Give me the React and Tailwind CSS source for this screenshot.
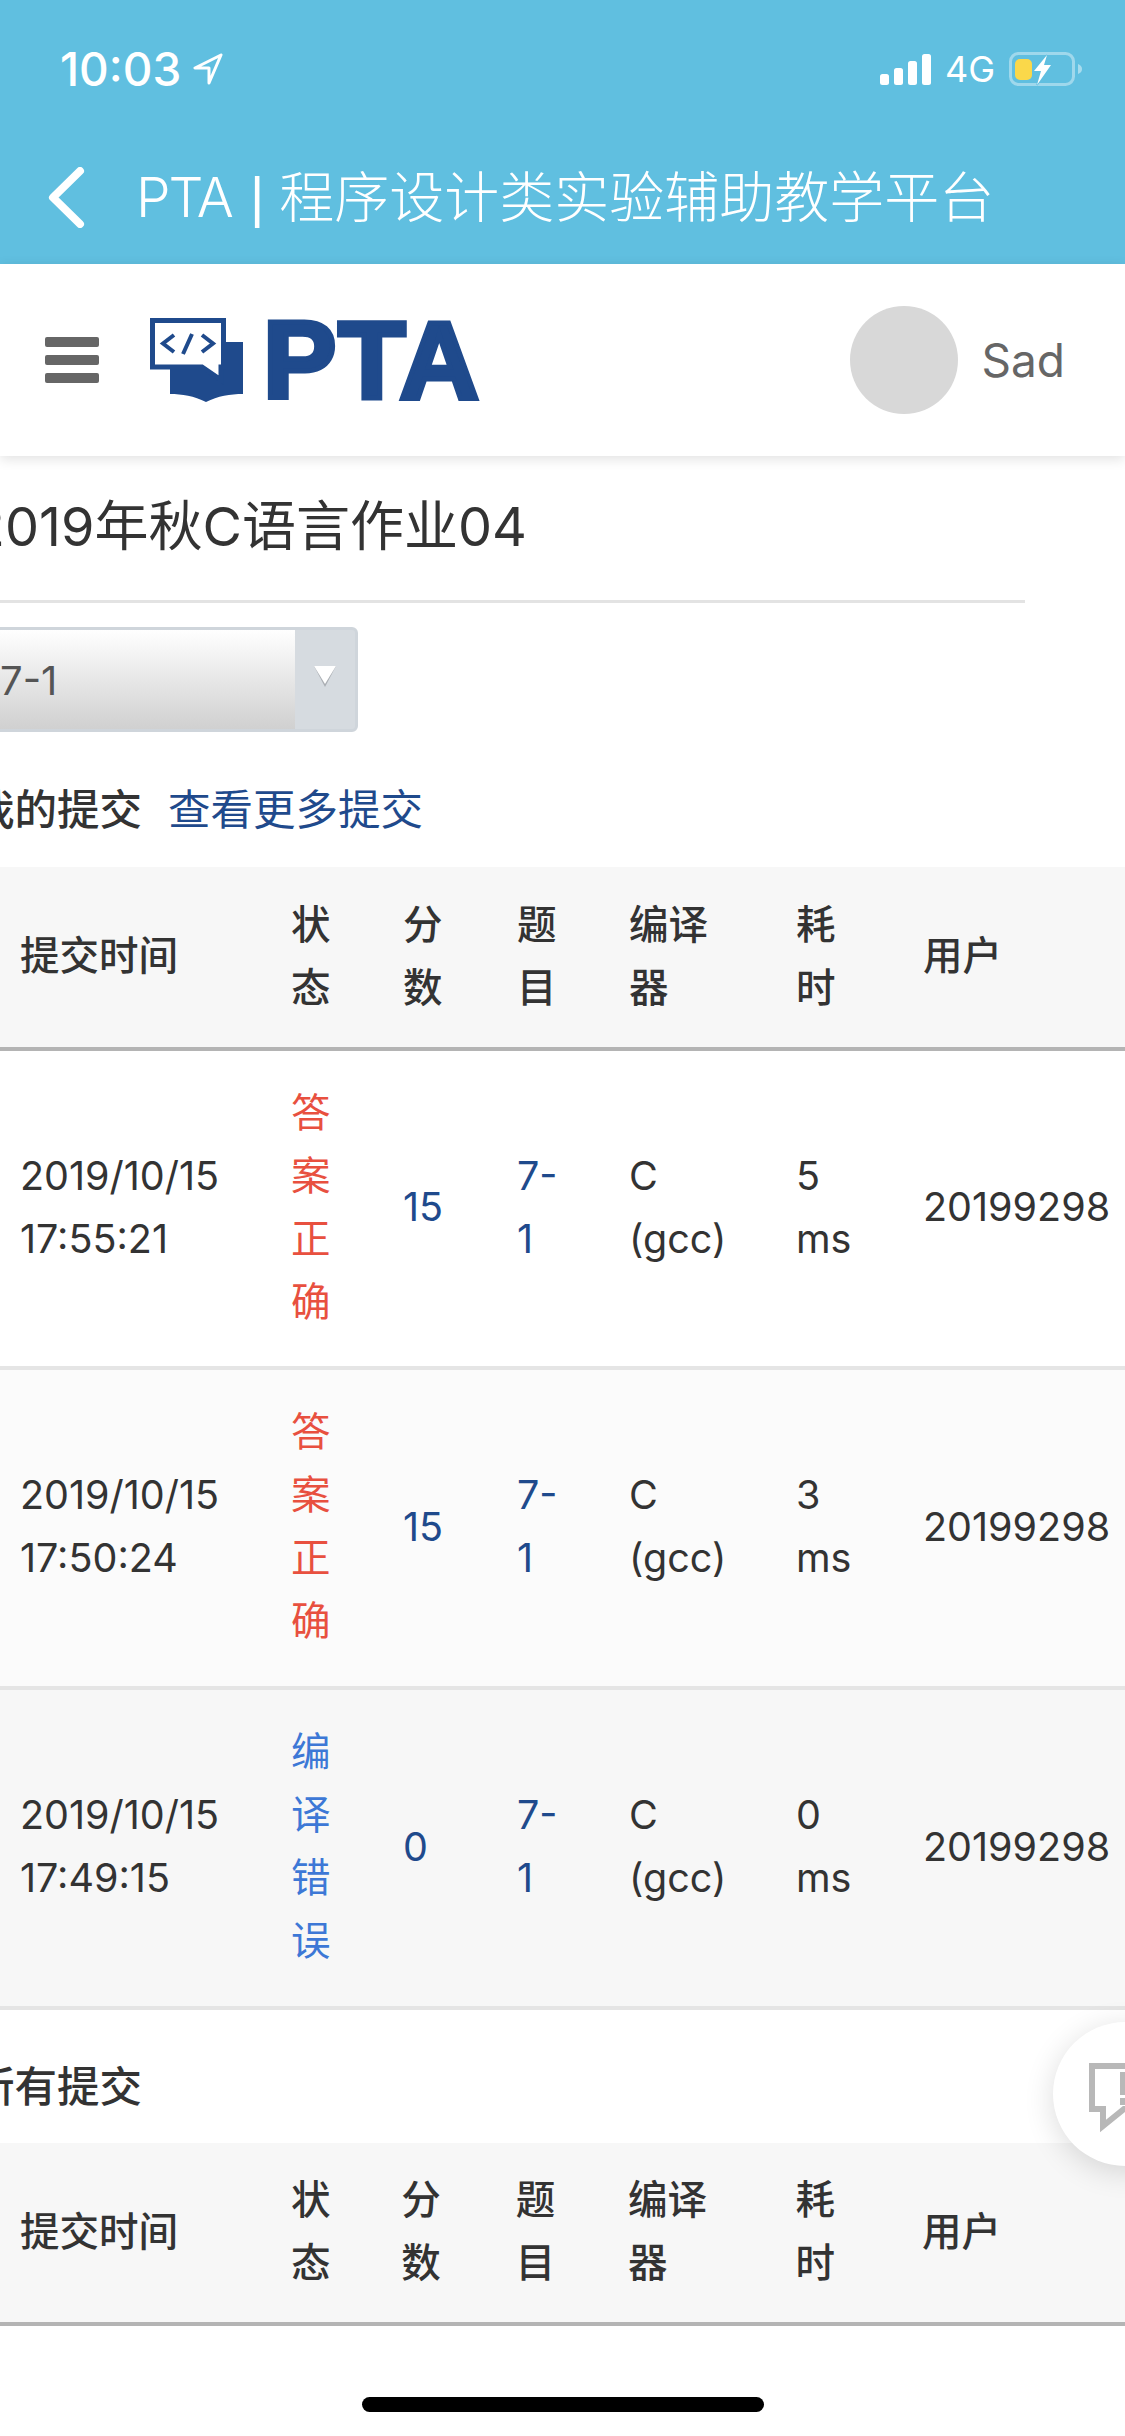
const LATIN = "font-['Inter','Noto_Sans_CJK_SC',sans-serif]";

const firstCols = ["w-[271px]", "w-[112px]", "w-[114px]", "w-[112px]", "w-[167px]", "w-[127px]", "w-[300px]"];
const secondCols = ["w-[270px]", "w-[110px]", "w-[114px]", "w-[112px]", "w-[167px]", "w-[126px]", "w-[300px]"];
const heads = ["提交时间", "状态", "分数", "题目", "编译器", "耗时", "用户"];

const rows = [
  { date: "2019/10/15 17:55:21", status: "答案正确", tone: "text-[#e8503f]", score: "15", cc: "C (gcc)", time: "5 ms", bg: "bg-white", h: "h-[319px]" },
  { date: "2019/10/15 17:50:24", status: "答案正确", tone: "text-[#e8503f]", score: "15", cc: "C (gcc)", time: "3 ms", bg: "bg-[#fbfbfb]", h: "h-[320px]" },
  { date: "2019/10/15 17:49:15", status: "编译错误", tone: "text-[#3d78d6]", score: "0", cc: "C (gcc)", time: "0 ms", bg: "bg-[#f7f7f7]", h: "h-[320px]" },
];

const cell = "pl-[20px] pr-[46px] pb-[2px] align-middle text-left border-[#e5e5e5]";

function Table({ cols, children, headH }) {
  return (
    <table className="table-fixed border-separate border-spacing-0 w-[1203px] text-[39.5px] leading-[63px] text-[#333333]">
      <colgroup>
        {cols.map((c, i) => (
          <col key={i} className={c} />
        ))}
      </colgroup>
      <thead>
        <tr className="bg-[#f7f7f7]">
          {heads.map((h) => (
            <th key={h} className={`${headH} pl-[20px] pr-[46px] pb-[1px] align-middle text-left font-medium border-b-4 border-[#b4b4b4]`}>
              {h}
            </th>
          ))}
        </tr>
      </thead>
      {children}
    </table>
  );
}

function StatusBar() {
  return (
    <div className="flex items-center justify-between h-[110px] pt-[28px] pl-[60px] pr-[42px]">
      <div className="flex items-center gap-[12px]">
        <span className="text-[46px] leading-none font-medium text-white">10:03</span>
        <svg width="30" height="32" viewBox="0 0 30 32" fill="none" stroke="white" strokeWidth="3" strokeLinejoin="round">
          <path d="M28 2 L2 15 H16 V30 Z" />
        </svg>
      </div>
      <div className="flex items-center">
        <svg width="51" height="31" viewBox="0 0 51 31" fill="white">
          <rect x="0" y="20" width="9" height="11" rx="2.5" />
          <rect x="14" y="14" width="9" height="17" rx="2.5" />
          <rect x="28" y="7" width="9" height="24" rx="2.5" />
          <rect x="42" y="0" width="9" height="31" rx="2.5" />
        </svg>
        <span className="ml-[14px] mr-[14px] text-[36px] leading-none text-white">4G</span>
        <svg width="74" height="34" viewBox="0 0 74 34" fill="none">
          <rect x="1.5" y="1.5" width="63" height="31" rx="8" stroke="white" strokeOpacity="0.4" strokeWidth="3" />
          <path d="M69 12 C72 13 73 15 73 17 C73 19 72 21 69 22 Z" fill="white" fillOpacity="0.45" />
          <rect x="6" y="7" width="17" height="21" rx="5" fill="#fad84a" />
          <path d="M38 3 L25 19 H32 L28 33 L42 13 H35 Z" fill="white" stroke="#60bfe0" strokeWidth="1.5" paintOrder="stroke" />
        </svg>
      </div>
    </div>
  );
}

function Logo() {
  return (
    <div className="flex items-center ml-[51px]">
      <svg width="94" height="85" viewBox="0 0 94 85">
        <path d="M76 24 H93 V76 C80 76 68 78 56 84 C44 78 32 76 20 76 V50 H76 Z" fill="#1f4a8c" />
        <path d="M2.5 2.5 H73.5 V49 H71 V62 L52 49 H2.5 Z" fill="white" stroke="#1f4a8c" strokeWidth="5" />
        <path d="M24 17 L13 25.5 L24 34 M52 17 L63 25.5 L52 34 M42 16 L33 36" fill="none" stroke="#1f4a8c" strokeWidth="4" />
      </svg>
      <span className="ml-[19px] text-[110px] leading-none font-bold tracking-[2px] text-[#1f4a8c] font-['Liberation_Sans',sans-serif] [-webkit-text-stroke:5px_#1f4a8c]">
        PTA
      </span>
    </div>
  );
}

export default function App() {
  return (
    <div className={`relative w-[1125px] h-[2436px] overflow-hidden bg-white ${LATIN}`}>
      <header className="h-[264px] bg-[#60bfe0]">
        <StatusBar />
        <div className="flex items-center h-[154px] pl-[48px] pt-[20px]">
          <svg width="37" height="61" viewBox="0 0 37 61" fill="none" stroke="white" strokeWidth="8" strokeLinecap="round" strokeLinejoin="round">
            <path d="M32 4 L5 30.5 L32 57" />
          </svg>
          <span className="flex items-center ml-[51px] text-[55px] leading-none font-light text-white whitespace-nowrap">
            <span className="tracking-[-2px]">PTA</span>
            <span className="ml-[18px] mr-[15px] font-['Liberation_Sans',sans-serif]">|</span>
            程序设计类实验辅助教学平台
          </span>
        </div>
      </header>

      <nav className="relative z-10 flex items-center justify-between h-[192px] bg-white pl-[45px] pr-[60px] shadow-[0_3px_12px_rgba(0,0,0,0.12)]">
        <div className="flex items-center">
          <div className="flex flex-col gap-[8px]">
            <span className="block w-[54px] h-[10px] rounded-[2px] bg-[#666666]" />
            <span className="block w-[54px] h-[10px] rounded-[2px] bg-[#666666]" />
            <span className="block w-[54px] h-[10px] rounded-[2px] bg-[#666666]" />
          </div>
          <Logo />
        </div>
        <div className="flex items-center gap-[23px]">
          <span className="block w-[108px] h-[108px] rounded-full bg-[#d8d8d8]" />
          <span className="text-[46px] leading-none text-[#666666]">Sad</span>
        </div>
      </nav>

      <main>
        <h1 className="flex items-center h-[147px] w-[1053px] -ml-[28px] pb-[3px] text-[54px] font-normal text-[#333333] border-b-[3px] border-[#e3e3e3] whitespace-nowrap">
          2019年秋C语言作业04
        </h1>

        <div className="flex mt-[24px] w-[388px] h-[105px] -ml-[30px] rounded-[6px] border-[3px] border-[#cfd5db] bg-[#d6dbe0]">
          <div className="flex items-center flex-1 pl-[27px] pt-[2px] text-[40px] text-[#555555] bg-gradient-to-b from-white to-[#d0d0d0]">
            7-1
          </div>
          <div className="flex items-center justify-center w-[60px] pb-[6px]">
            <svg width="22" height="21" viewBox="0 0 22 21">
              <path d="M0 0 H22 L11 21 Z" fill="#a9adb2" />
              <path d="M0 0 H22 L11 18 Z" fill="white" />
            </svg>
          </div>
        </div>

        <div className="flex items-center h-[135px] pt-[21px] -ml-[28px] text-[42.5px]">
          <span className="font-medium text-[#333333]">我的提交</span>
          <span className="ml-[26px] text-[#1f4a8c]">查看更多提交</span>
        </div>

        <Table cols={firstCols} headH="h-[184px]">
          <tbody>
            {rows.map((r) => (
              <tr key={r.date} className={r.bg}>
                <td className={`${cell} ${r.h} border-b-4`}>{r.date}</td>
                <td className={`${cell} border-b-4 ${r.tone}`}>{r.status}</td>
                <td className={`${cell} border-b-4 text-[#1f4a8c]`}>{r.score}</td>
                <td className={`${cell} border-b-4 text-[#1f4a8c]`}>7-1</td>
                <td className={`${cell} border-b-4`}>{r.cc}</td>
                <td className={`${cell} border-b-4`}>{r.time}</td>
                <td className={`${cell} border-b-4`}>20199298</td>
              </tr>
            ))}
          </tbody>
        </Table>

        <div className="flex items-center h-[133px] pt-[20px] -ml-[28px] text-[42.5px] font-medium text-[#333333]">所有提交</div>

        <Table cols={secondCols} headH="h-[183px]" />
      </main>

      <button className="absolute left-[1053px] top-[2022px] block w-[144px] h-[144px] rounded-full bg-white shadow-[0_6px_30px_rgba(0,0,0,0.14)]">
        <svg className="absolute left-[36px] top-[41px]" width="80" height="70" viewBox="0 0 80 70" fill="none">
          <path d="M3 3 H77 V46 H35 L14 63 V46 H3 Z" stroke="#b8b8b8" strokeWidth="6" />
          <rect x="31" y="9" width="11" height="23" fill="#b8b8b8" />
          <rect x="31" y="35" width="11" height="7" fill="#b8b8b8" />
        </svg>
      </button>

      <div className="absolute left-[362px] top-[2397px] w-[402px] h-[15px] rounded-full bg-black" />
    </div>
  );
}
